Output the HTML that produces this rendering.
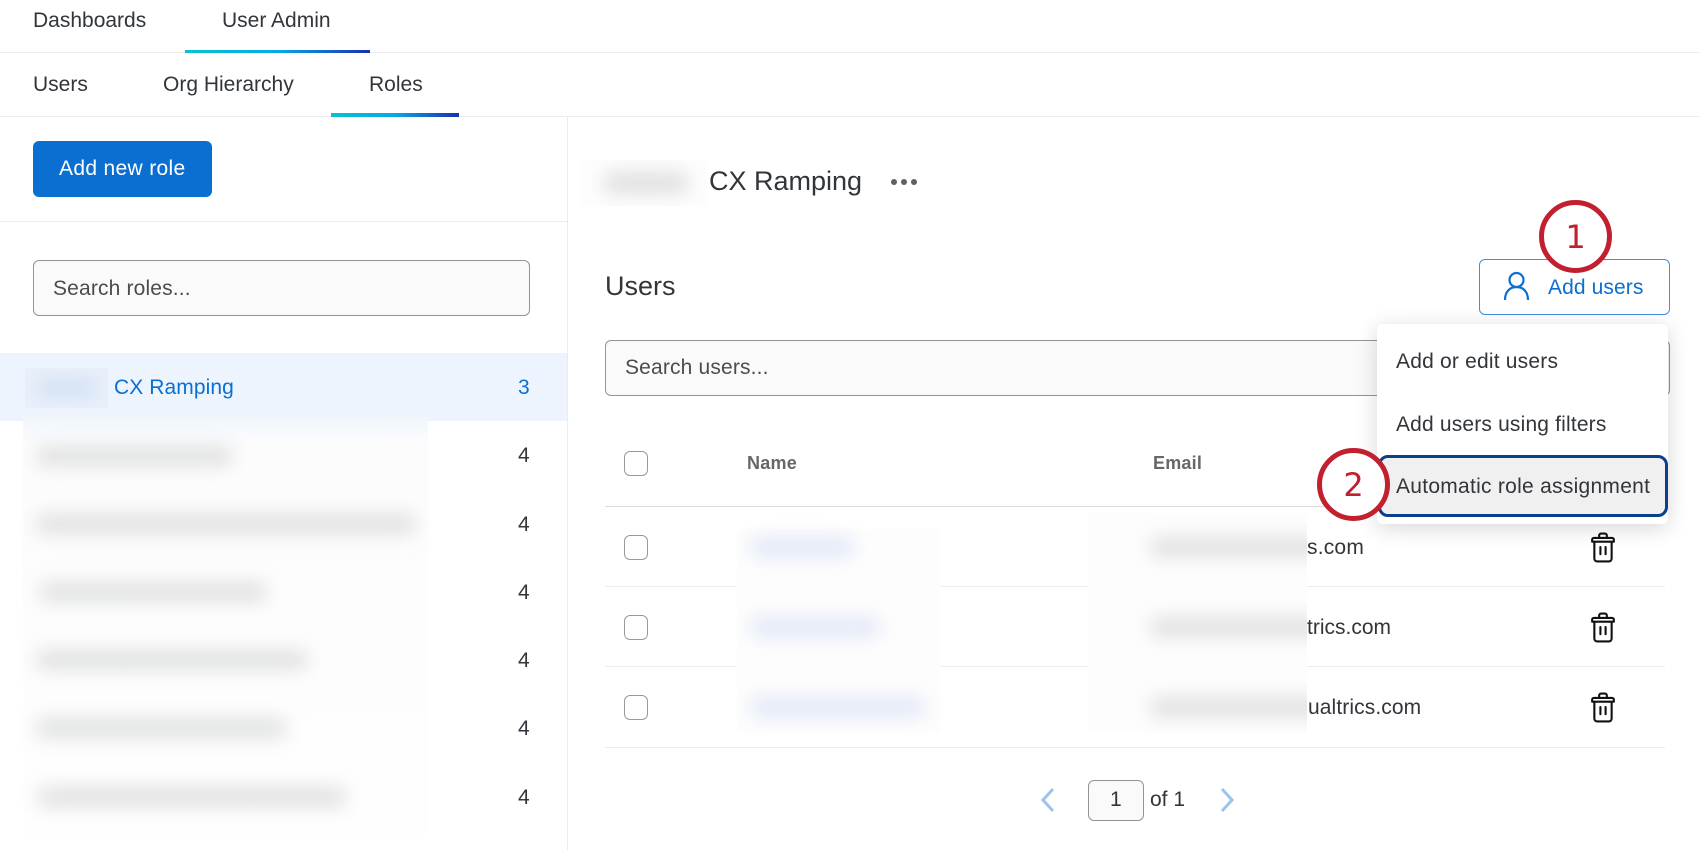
<!DOCTYPE html>
<html lang="en"><head><meta charset="utf-8"><title>User Admin</title>
<style>
html,body{margin:0;padding:0;background:#fff}
body{position:relative;width:1700px;height:850px;overflow:hidden;font-family:"Liberation Sans",sans-serif;color:#32363a}
.a{position:absolute;box-sizing:border-box}
.t{position:absolute;white-space:nowrap;line-height:20px;font-size:21px}
.b{position:absolute;filter:blur(9px);height:20px;background:#e0e1e1;border-radius:8px}
.bl{background:#e2e8f7}
.l{position:absolute;height:1px;background:#ececec}
.g{background:linear-gradient(90deg,#07c1d0,#06a9e6 50%,#1a2fb0)}
.cb{position:absolute;left:624px;width:24px;height:25px;border:1px solid #999;border-radius:6px;background:#fff;box-sizing:border-box}
.inp{position:absolute;box-sizing:border-box;border:1px solid #949494;border-radius:6px;background:#fafafa}
.n{position:absolute;left:518px;font-size:21px;line-height:20px;color:#32363a}
.c{position:absolute;box-sizing:border-box;border:5.5px solid #c1202f;border-radius:50%;background:#fff;width:73px;height:73px;color:#c1202f;font-family:"DejaVu Sans",sans-serif;font-size:32px;line-height:64px;text-align:center}
</style></head><body>

<div class="t" style="left:33px;top:11px">Dashboards</div>
<div class="t" style="left:222px;top:11px">User Admin</div>
<div class="l" style="left:0;top:52px;width:1700px"></div>
<div class="a g" style="left:185px;top:50px;width:185px;height:3px"></div>

<div class="t" style="left:33px;top:75px">Users</div>
<div class="t" style="left:163px;top:75px">Org Hierarchy</div>
<div class="t" style="left:369px;top:75px">Roles</div>
<div class="l" style="left:0;top:116px;width:1700px"></div>
<div class="a g" style="left:331px;top:113px;width:128px;height:4px"></div>

<div class="a" style="left:567px;top:117px;width:1px;height:733px;background:#ececf0"></div>

<div class="a" style="left:33px;top:141px;width:179px;height:56px;background:#0b6fd1;border-radius:6px"></div>
<div class="t" style="left:59px;top:159px;color:#fff;letter-spacing:.33px">Add new role</div>
<div class="l" style="left:0;top:221px;width:567px"></div>

<div class="inp" style="left:33px;top:260px;width:497px;height:56px"></div>
<div class="t" style="left:53px;top:279px;color:#4a4d50;letter-spacing:.16px">Search roles...</div>

<div class="a" style="left:0;top:353px;width:567px;height:68px;background:#edf4fd"></div>
<div class="a" style="left:23px;top:414px;width:405px;height:420px;background:linear-gradient(#eff5fc,#fcfcfd 30px,#fefefe)"></div>
<div class="a" style="left:25px;top:368px;width:83px;height:40px;background:#e9f0fa;overflow:hidden"><div class="b" style="left:12px;top:10px;width:60px;background:#d3e1f4"></div></div>
<div class="t" style="left:114px;top:378px;color:#0b6fd1;letter-spacing:.08px">CX Ramping</div>
<div class="n" style="top:378px;color:#0b6fd1">3</div>

<div class="b" style="left:36px;top:446px;width:196px"></div>
<div class="b" style="left:36px;top:514px;width:380px"></div>
<div class="b" style="left:40px;top:582px;width:226px"></div>
<div class="b" style="left:36px;top:650px;width:272px"></div>
<div class="b" style="left:36px;top:718px;width:250px"></div>
<div class="b" style="left:38px;top:787px;width:308px"></div>
<div class="n" style="top:446px">4</div>
<div class="n" style="top:515px">4</div>
<div class="n" style="top:583px">4</div>
<div class="n" style="top:651px">4</div>
<div class="n" style="top:719px">4</div>
<div class="n" style="top:788px">4</div>

<div class="a" style="left:580px;top:160px;width:127px;height:46px;overflow:hidden;background:#fdfdfd"><div class="b" style="left:24px;top:12px;width:84px;height:22px;background:#e0e0e0"></div></div>
<div class="t" style="left:709px;top:171px;font-size:27px">CX Ramping</div>
<div class="a" style="left:891px;top:179px;width:6px;height:6px;border-radius:50%;background:#5d6064"></div>
<div class="a" style="left:901px;top:179px;width:6px;height:6px;border-radius:50%;background:#5d6064"></div>
<div class="a" style="left:911px;top:179px;width:6px;height:6px;border-radius:50%;background:#5d6064"></div>

<div class="t" style="left:605px;top:276px;font-size:27px">Users</div>

<div class="a" style="left:1479px;top:259px;width:191px;height:56px;border:1px solid #3f8fdc;border-radius:6px;background:#fff"></div>
<svg class="a" style="left:1503px;top:271px" width="27" height="30" viewBox="0 0 27 30" fill="none" stroke="#0b6fd1" stroke-width="2.2"><circle cx="13.5" cy="9" r="7"/><path d="M2 29c0-8 4.500-13 11.500-13S25 21 25 29"/></svg>
<div class="t" style="left:1548px;top:278px;color:#0b6fd1;letter-spacing:.1px">Add users</div>

<div class="inp" style="left:605px;top:340px;width:1065px;height:56px"></div>
<div class="t" style="left:625px;top:358px;color:#4a4d50;letter-spacing:.16px">Search users...</div>

<div class="cb" style="top:451px"></div>
<div class="t" style="left:747px;top:453px;font-size:18px;font-weight:bold;color:#65686b;letter-spacing:.25px">Name</div>
<div class="t" style="left:1153px;top:453px;font-size:18px;font-weight:bold;color:#65686b;letter-spacing:.2px">Email</div>
<div class="l" style="left:605px;top:506px;width:1060px;background:#dcdcdc"></div>
<div class="l" style="left:605px;top:586px;width:1060px"></div>
<div class="l" style="left:605px;top:666px;width:1060px"></div>
<div class="l" style="left:605px;top:747px;width:1060px"></div>

<div class="a" style="left:737px;top:529px;width:204px;height:204px;background:#fdfdfd"></div>
<div class="a" style="left:1088px;top:513px;width:219px;height:220px;background:#fdfdfd;overflow:hidden">
  <div class="b" style="left:62px;top:24px;width:180px"></div>
  <div class="b" style="left:62px;top:104px;width:180px"></div>
  <div class="b" style="left:62px;top:184px;width:180px"></div>
</div>

<div class="cb" style="top:535px"></div>
<div class="cb" style="top:615px"></div>
<div class="cb" style="top:695px"></div>

<div class="b bl" style="left:750px;top:537px;width:104px"></div>
<div class="b bl" style="left:750px;top:617px;width:130px"></div>
<div class="b bl" style="left:750px;top:697px;width:175px"></div>

<div class="t" style="left:1307px;top:538px;letter-spacing:.2px">s.com</div>
<div class="t" style="left:1307px;top:618px">trics.com</div>
<div class="t" style="left:1308px;top:698px;letter-spacing:.1px">ualtrics.com</div>

<svg class="a" style="left:1591px;top:532px" width="24" height="31" viewBox="0 0 25 32" fill="none" stroke="#111" stroke-width="2.2" stroke-linecap="round" stroke-linejoin="round"><path d="M8.500 6V3.500a2 2 0 0 1 2-2h4a2 2 0 0 1 2 2V6M3.500 10v17.500a3 3 0 0 0 3 3h12a3 3 0 0 0 3-3V10M3 6h19a1.800 1.800 0 0 1 1.800 1.900V10H1.200V7.900A1.800 1.800 0 0 1 3 6zM9.800 15.500v7.500M15.200 15.500v7.500"/></svg>
<svg class="a" style="left:1591px;top:612px" width="24" height="31" viewBox="0 0 25 32" fill="none" stroke="#111" stroke-width="2.2" stroke-linecap="round" stroke-linejoin="round"><path d="M8.500 6V3.500a2 2 0 0 1 2-2h4a2 2 0 0 1 2 2V6M3.500 10v17.500a3 3 0 0 0 3 3h12a3 3 0 0 0 3-3V10M3 6h19a1.800 1.800 0 0 1 1.800 1.900V10H1.200V7.900A1.800 1.800 0 0 1 3 6zM9.800 15.500v7.500M15.200 15.500v7.500"/></svg>
<svg class="a" style="left:1591px;top:692px" width="24" height="31" viewBox="0 0 25 32" fill="none" stroke="#111" stroke-width="2.2" stroke-linecap="round" stroke-linejoin="round"><path d="M8.500 6V3.500a2 2 0 0 1 2-2h4a2 2 0 0 1 2 2V6M3.500 10v17.500a3 3 0 0 0 3 3h12a3 3 0 0 0 3-3V10M3 6h19a1.800 1.800 0 0 1 1.800 1.900V10H1.200V7.900A1.800 1.800 0 0 1 3 6zM9.800 15.500v7.500M15.200 15.500v7.500"/></svg>

<svg class="a" style="left:1039px;top:787px" width="18" height="26" viewBox="0 0 18 26" fill="none" stroke="#9cc3ee" stroke-width="3"><path d="M14 2 4 13l10 11"/></svg>
<div class="inp" style="left:1088px;top:780px;width:56px;height:41px"></div>
<div class="t" style="left:1110px;top:790px">1</div>
<div class="t" style="left:1150px;top:790px">of 1</div>
<svg class="a" style="left:1218px;top:787px" width="18" height="26" viewBox="0 0 18 26" fill="none" stroke="#9cc3ee" stroke-width="3"><path d="M4 2l10 11L4 24"/></svg>

<div class="a" style="left:1377px;top:324px;width:291px;height:200px;background:#fff;border-radius:6px;box-shadow:0 4px 22px rgba(0,0,0,.16)"></div>
<div class="t" style="left:1396px;top:352px;letter-spacing:.2px">Add or edit users</div>
<div class="t" style="left:1396px;top:415px;letter-spacing:.17px">Add users using filters</div>
<div class="a" style="left:1378px;top:455px;width:290px;height:62px;border:3px solid #0b3f8c;border-radius:10px;background:#f0f0f0"></div>
<div class="t" style="left:1396px;top:477px;letter-spacing:.27px">Automatic role assignment</div>

<div class="c" style="left:1539px;top:200px">1</div>
<div class="c" style="left:1317px;top:448px">2</div>
</body></html>
